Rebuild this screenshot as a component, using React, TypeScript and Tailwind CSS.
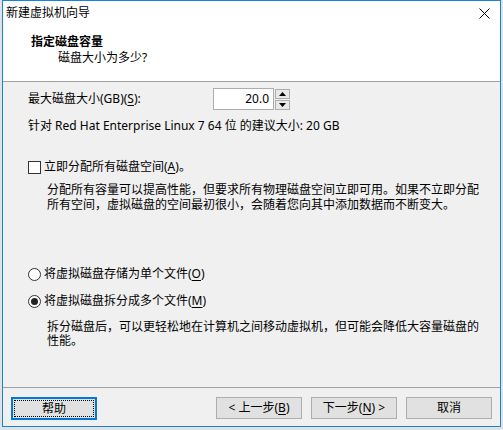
import React from "react";

const font = { fontFamily: '"Noto Sans", "Noto Sans CJK SC", sans-serif' };

function U({ c }: { c: string }) {
  return <span className="underline underline-offset-2">{c}</span>;
}

function Btn({ children, focused }: { children: React.ReactNode; focused?: boolean }) {
  if (focused) {
    return (
      <div className="w-[86px] h-[23px] border-2 border-[#0078d7] bg-[#e1e1e1] p-px">
        <div className="w-full h-full border border-dotted border-black flex items-center justify-center text-[12px] leading-[16px] text-black">
          {children}
        </div>
      </div>
    );
  }
  return (
    <div className="w-[86px] h-[22px] border border-[#adadad] bg-[#e1e1e1] flex items-center justify-center text-[12px] leading-[16px] text-black">
      {children}
    </div>
  );
}

export default function App() {
  return (
    <div className="w-[503px] h-[430px] bg-[#dfe3e8] overflow-hidden" style={font}>
      <div className="ml-[2px] w-[499px] h-[427px] border border-[#1883d7] bg-[#f0f0f0] flex flex-col text-black">
        {/* title bar */}
        <div className="h-[24px] bg-white flex items-center justify-between pl-[3px] pr-[10px]">
          <span className="text-[12px] leading-[16px]">新建虚拟机向导</span>
          <svg width="11" height="11" viewBox="0 0 11 11">
            <path d="M0.5 0.5 L10.5 10.5 M10.5 0.5 L0.5 10.5" stroke="#000" strokeWidth="1" />
          </svg>
        </div>
        {/* header */}
        <div className="bg-white border-b border-[#a0a0a0] pt-[9px] pb-[12px] pl-[28px] h-[57px]">
          <div className="text-[12px] leading-[16px] font-bold">指定磁盘容量</div>
          <div className="text-[12px] leading-[16px] pl-[27px]">磁盘大小为多少?</div>
        </div>
        {/* body */}
        <div className="flex-1 pl-[25px] pt-[6px] text-[12px]">
          <div className="flex items-center h-[22px]">
            <div className="w-[185px] leading-[16px]">
              最大磁盘大小(GB)(<U c="S" />):
            </div>
            <div className="w-[61px] h-[22px] border border-[#adadad] bg-white flex items-center justify-end pr-[4px] leading-[16px]">
              20.0
            </div>
            <div className="ml-[1px] flex flex-col gap-px">
              <div className="w-[15px] h-[10px] border border-[#adadad] bg-[#e8e8e8] flex items-center justify-center">
                <svg width="7" height="4" viewBox="0 0 7 4"><path d="M3.5 0 L7 4 L0 4 Z" fill="#000" /></svg>
              </div>
              <div className="w-[15px] h-[10px] border border-[#adadad] bg-[#e8e8e8] flex items-center justify-center">
                <svg width="7" height="4" viewBox="0 0 7 4"><path d="M0 0 L7 0 L3.5 4 Z" fill="#000" /></svg>
              </div>
            </div>
          </div>
          <div className="mt-[8px] leading-[16px]">
            针对 Red Hat Enterprise Linux 7 64 位 的建议大小: 20 GB
          </div>
          <div className="mt-[25px] flex items-center h-[16px]">
            <div className="w-[13px] h-[13px] border border-[#333] bg-white" />
            <span className="ml-[3px] leading-[16px]">
              立即分配所有磁盘空间(<U c="A" />)。
            </span>
          </div>
          <div className="mt-[7px] pl-[19px] leading-[15px]">
            分配所有容量可以提高性能，但要求所有物理磁盘空间立即可用。如果不立即分配
            <br />
            所有空间，虚拟磁盘的空间最初很小，会随着您向其中添加数据而不断变大。
          </div>
          <div className="mt-[54px] flex items-center h-[16px]">
            <div className="w-[13px] h-[13px] rounded-full border border-[#333] bg-white" />
            <span className="ml-[3px] leading-[16px]">
              将虚拟磁盘存储为单个文件(<U c="O" />)
            </span>
          </div>
          <div className="mt-[11px] flex items-center h-[16px]">
            <div className="w-[13px] h-[13px] rounded-full border border-[#333] bg-white flex items-center justify-center">
              <div className="w-[7px] h-[7px] rounded-full bg-[#222]" />
            </div>
            <span className="ml-[3px] leading-[16px]">
              将虚拟磁盘拆分成多个文件(<U c="M" />)
            </span>
          </div>
          <div className="mt-[11px] pl-[19px] leading-[14px]">
            拆分磁盘后，可以更轻松地在计算机之间移动虚拟机，但可能会降低大容量磁盘的
            <br />
            性能。
          </div>
        </div>
        {/* separator */}
        <div className="h-px bg-[#a0a0a0]" />
        {/* buttons */}
        <div className="h-[38px] pt-[9px] pl-[8px] pr-[8px] flex items-start">
          <Btn focused>帮助</Btn>
          <div className="flex-1" />
          <div className="flex gap-[9px]">
            <Btn>&lt; 上一步(<U c="B" />)</Btn>
            <Btn>下一步(<U c="N" />) &gt;</Btn>
            <Btn>取消</Btn>
          </div>
        </div>
      </div>
    </div>
  );
}
